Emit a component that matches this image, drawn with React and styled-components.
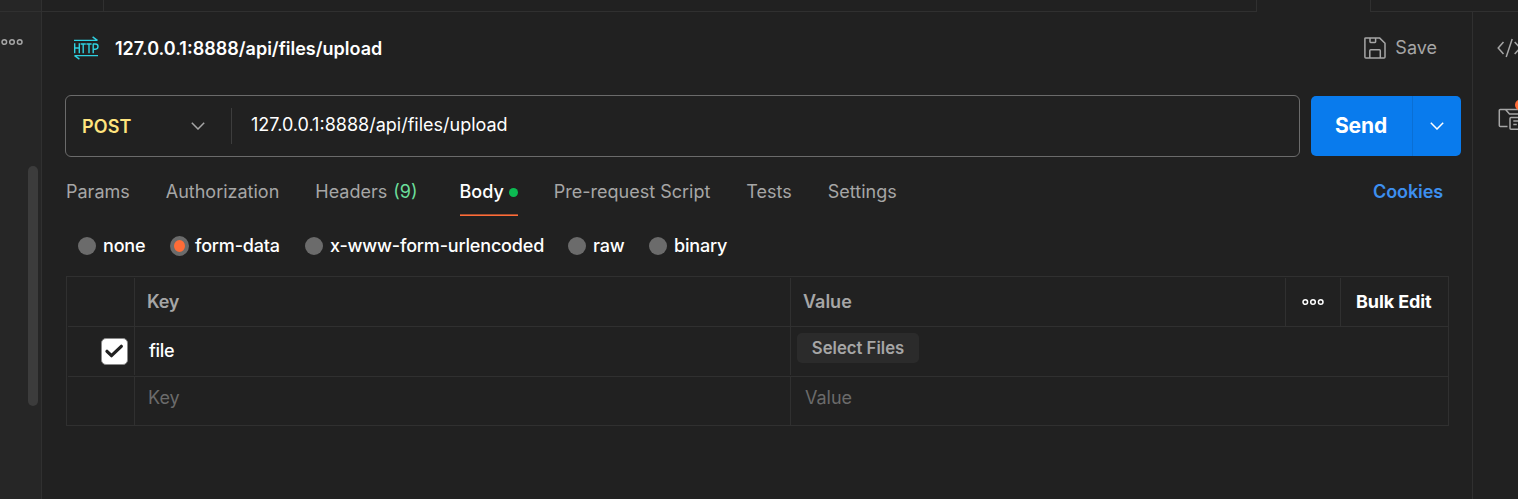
import React from 'react';
import styled, { createGlobalStyle } from 'styled-components';

const c = {
  bg: '#212121',
  side: '#262626',
  line: '#303030',
  text: '#ffffff',
  muted: '#a6a6a6',
  faint: '#6b6b6b',
  orange: '#ff6c37',
  green: '#0cbb52',
  blue: '#097bed',
};

const GlobalStyle = createGlobalStyle`
  * { box-sizing: border-box; }
  body {
    margin: 0;
    background: ${c.bg};
    color: ${c.text};
    font-family: Inter, "Liberation Sans", sans-serif;
    font-size: 18px;
    line-height: 24px;
    overflow: hidden;
  }
  svg { display: block; flex: none; }
`;

const Page = styled.div`
  width: 1518px;
  height: 499px;
  display: flex;
  overflow: hidden;
`;

const Sidebar = styled.aside`
  width: 42px;
  flex: none;
  background: ${c.side};
  border-right: 1px solid ${c.line};
  display: flex;
  flex-direction: column;
`;

const SidebarTop = styled.div`
  height: 12px;
  border-bottom: 1px solid ${c.line};
`;

const SidebarMore = styled.div`
  margin: 26px 0 0 1px;
`;

const ScrollThumb = styled.div`
  width: 10px;
  height: 240px;
  margin: 120px 3px 0 auto;
  border-radius: 5px;
  background: #3c3c3c;
`;

const Workspace = styled.div`
  flex: 1;
  min-width: 0;
  display: flex;
  flex-direction: column;
`;

const TabStrip = styled.div`
  height: 12px;
  flex: none;
  display: flex;
`;

const StripCell = styled.div`
  width: ${(p) => p.$width || 'auto'};
  flex: ${(p) => (p.$width ? 'none' : 1)};
  border-right: ${(p) => (p.$divider ? `1px solid ${c.line}` : '0')};
  border-bottom: ${(p) => (p.$open ? '0' : `1px solid ${c.line}`)};
`;

const Content = styled.div`
  flex: 1;
  display: flex;
`;

const Request = styled.main`
  width: 1431px;
  flex: none;
  border-right: 1px solid ${c.line};
  display: flex;
  flex-direction: column;
`;

const Header = styled.header`
  height: 72px;
  padding: 0 35px 0 31px;
  display: flex;
  align-items: center;
`;

const Title = styled.h1`
  margin: 0 auto 0 16px;
  padding-top: 2px;
  font-size: 18px;
  font-weight: 600;
`;

const SaveButton = styled.div`
  display: flex;
  align-items: center;
  gap: 9px;
  color: ${c.muted};
`;

const UrlRow = styled.div`
  display: flex;
  align-items: center;
  gap: 11px;
  margin: 11px 0 0 23px;
`;

const UrlBox = styled.div`
  width: 1235px;
  height: 62px;
  border: 1px solid #6b6b6b;
  border-radius: 6px;
  display: flex;
  align-items: center;
`;

const Method = styled.div`
  width: 166px;
  height: 36px;
  padding: 0 26px 0 16px;
  border-right: 1px solid #3d3d3d;
  display: flex;
  align-items: center;
  justify-content: space-between;
  color: #ffe47e;
  font-weight: 600;
`;

const MethodName = styled.span`
  padding-top: 2px;
  letter-spacing: 0.15px;
`;

const Url = styled.div`
  padding: 0 0 3px 19px;
`;

const Send = styled.div`
  width: 150px;
  height: 60px;
  border-radius: 5px;
  background: ${c.blue};
  display: flex;
  overflow: hidden;
`;

const SendLabel = styled.div`
  width: 102px;
  padding-right: 1px;
  border-right: 1px solid #0a6fd4;
  display: flex;
  align-items: center;
  justify-content: center;
  font-size: 21px;
  font-weight: 700;
  letter-spacing: -0.1px;
`;

const SendMore = styled.div`
  flex: 1;
  display: flex;
  align-items: center;
  justify-content: center;
`;

const Tabs = styled.nav`
  height: 59px;
  padding: 0 29px 0 24px;
  display: flex;
  gap: 36px;
`;

const Tab = styled.div`
  height: 59px;
  margin-left: ${(p) => (p.$active ? '6px' : '0')};
  padding-top: 23px;
  display: flex;
  gap: ${(p) => (p.$active ? '5px' : '6px')};
  color: ${(p) => (p.$active ? c.text : c.muted)};
  font-weight: ${(p) => (p.$active ? 500 : 400)};
  box-shadow: ${(p) => (p.$active ? `inset 0 -1px 0 ${c.orange}, inset 0 -2px 0 #a64d2f` : 'none')};
`;

const Count = styled.span`
  color: #6bdd9a;
`;

const Dot = styled.i`
  width: 9px;
  height: 9px;
  margin-top: 8px;
  border-radius: 50%;
  background: ${c.green};
`;

const Cookies = styled.div`
  margin-left: auto;
  padding-top: 23px;
  color: #3d8fef;
  font-weight: 600;
  letter-spacing: -0.1px;
`;

const Options = styled.div`
  height: 60px;
  padding-left: 36px;
  display: flex;
  align-items: center;
`;

const Option = styled.label`
  width: ${(p) => p.$width};
  display: flex;
  align-items: center;
  gap: ${(p) => (p.$on ? '6px' : '7px')};
  font-weight: 500;
  letter-spacing: -0.18px;
  white-space: nowrap;
`;

const Radio = styled.i`
  width: ${(p) => (p.$on ? '19px' : '18px')};
  height: ${(p) => (p.$on ? '20px' : '18px')};
  border-radius: 50%;
  border: ${(p) => (p.$on ? '4px' : '0')} solid ${c.faint};
  background: ${(p) => (p.$on ? c.orange : c.faint)};
`;

const Table = styled.div`
  width: 1383px;
  height: 150px;
  margin-left: 24px;
  padding: 1px 0 0 1px;
  border: 1px solid ${c.line};
  display: flex;
  flex-direction: column;
`;

const Row = styled.div`
  height: ${(p) => p.$height};
  padding-bottom: ${(p) => p.$inset || '0'};
  border-bottom: ${(p) => (p.$last ? '0' : `1px solid ${c.line}`)};
  display: grid;
  grid-template-columns: ${(p) => (p.$head ? '67px 656px 495px 55px 107px' : '67px 656px 1fr')};
`;

const Cell = styled.div`
  border-right: ${(p) => (p.$end ? '0' : `1px solid ${c.line}`)};
  padding-left: ${(p) => p.$left || '0'};
  padding-top: ${(p) => p.$top || '0'};
  display: flex;
  align-items: flex-start;
  color: ${(p) => p.$color || c.text};
  font-weight: ${(p) => p.$weight || 400};
  letter-spacing: ${(p) => p.$track || 'normal'};
`;

const Check = styled.span`
  width: 27px;
  height: 27px;
  border-radius: 5px;
  background: #fff;
  border: 1px solid #8a8a8a;
  display: flex;
  align-items: center;
  justify-content: center;
`;

const SelectFiles = styled.span`
  width: 122px;
  height: 30px;
  border-radius: 5px;
  background: #2b2b2b;
  color: ${c.muted};
  font-size: 16.7px;
  font-weight: 600;
  line-height: 30px;
  text-align: center;
`;

const Rail = styled.aside`
  flex: 1;
  min-width: 0;
  overflow: hidden;
  padding-left: 23px;
  display: flex;
  flex-direction: column;
`;

const RailIcon = styled.div`
  margin-top: ${(p) => p.$top};
  margin-left: ${(p) => p.$left || '0'};
`;

const More = ({ color }) => (
  <svg width="22" height="8" viewBox="0 0 22 8" fill="none" stroke={color} strokeWidth="1.5">
    <circle cx="3.3" cy="4" r="2.3" />
    <circle cx="11" cy="4" r="2.3" />
    <circle cx="18.7" cy="4" r="2.3" />
  </svg>
);

const Chevron = ({ color }) => (
  <svg width="14" height="8" viewBox="0 0 14 8" fill="none" stroke={color} strokeWidth="1.5">
    <path d="M.8 .8 7 7l6.200-6.200" />
  </svg>
);

const HttpIcon = () => (
  <svg width="26" height="24" viewBox="0 0 26 24" fill="none" stroke="#2fd0e0" strokeWidth="1.4" strokeLinejoin="bevel">
    <path d="M1 4.400H24.400L19.600 .9" />
    <path d="M25 19.600H1.600L6.400 23.100" />
    <path d="M1.700 7.300v9.900M6.300 7.300v9.900M1.700 12h4.600M7.600 8h5.200M10.200 8v9.200M13.400 8h5.200M16 8v9.200M20.200 17.200V8h2.200a2.200 2.200 0 0 1 0 5.200h-2.200" />
  </svg>
);

const SaveIcon = () => (
  <svg width="22" height="22" viewBox="0 0 22 22" fill="none" stroke="#a6a6a6" strokeWidth="1.500" strokeLinejoin="round">
    <path d="M1.700 .9H15.500L21 6.200V20.100a1 1 0 0 1-1 1H1.900a1 1 0 0 1-1-1V1.700a.8 .8 0 0 1 .8-.8Z" />
    <path d="M6 1V4.800a.6 .6 0 0 0 .6 .6H11a.6 .6 0 0 0 .6-.6V1M5.800 21V13.700a.9 .9 0 0 1 .9-.9h8.700a.9 .9 0 0 1 .9 .9V21" />
  </svg>
);

const CodeIcon = () => (
  <svg width="28" height="20" viewBox="0 0 28 20" fill="none" stroke="#a6a6a6" strokeWidth="1.500">
    <path d="M7.500 4 2.200 10l5.300 6M16.200 1 10.200 19M18.700 4 24 10l-5.300 6" />
  </svg>
);

const DocsIcon = () => (
  <svg width="32" height="34" viewBox="0 0 32 34" fill="none" stroke="#a6a6a6" strokeWidth="1.500" strokeLinejoin="round">
    <path d="M9.500 27.500H2.300a1 1 0 0 1-1-1V11.500a1 1 0 0 1 1-1H7.500l4 4.500H24M7.500 10.500h16" />
    <path d="M13 18.400H24.500v11.800H13a1 1 0 0 1-1-1V19.400a1 1 0 0 1 1-1ZM15.300 22h5M15.300 25.500h3.500" />
    <circle cx="22.500" cy="6" r="5.500" fill="#ff6c37" stroke="none" />
  </svg>
);

const options = [
  ['none', '92px'],
  ['form-data', '135px', true],
  ['x-www-form-urlencoded', '263px'],
  ['raw', '81px'],
  ['binary', '90px'],
];

export default function App() {
  return (
    <Page>
      <GlobalStyle />
      <Sidebar>
        <SidebarTop />
        <SidebarMore><More color="#a6a6a6" /></SidebarMore>
        <ScrollThumb />
      </Sidebar>
      <Workspace>
        <TabStrip>
          <StripCell $width="62px" $divider />
          <StripCell $width="1153px" $divider />
          <StripCell $width="114px" $divider $open />
          <StripCell />
        </TabStrip>
        <Content>
          <Request>
            <Header>
              <HttpIcon />
              <Title>127.0.0.1:8888/api/files/upload</Title>
              <SaveButton><SaveIcon />Save</SaveButton>
            </Header>
            <UrlRow>
              <UrlBox>
                <Method><MethodName>POST</MethodName><Chevron color="#a6a6a6" /></Method>
                <Url>127.0.0.1:8888/api/files/upload</Url>
              </UrlBox>
              <Send>
                <SendLabel>Send</SendLabel>
                <SendMore><Chevron color="#fff" /></SendMore>
              </Send>
            </UrlRow>
            <Tabs>
              <Tab>Params</Tab>
              <Tab>Authorization</Tab>
              <Tab>Headers <Count>(9)</Count></Tab>
              <Tab $active>Body <Dot /></Tab>
              <Tab>Pre-request Script</Tab>
              <Tab>Tests</Tab>
              <Tab>Settings</Tab>
              <Cookies>Cookies</Cookies>
            </Tabs>
            <Options>
              {options.map(([label, width, on]) => (
                <Option key={label} $width={width} $on={on}><Radio $on={on} />{label}</Option>
              ))}
            </Options>
            <Table>
              <Row $head $height="49px">
                <Cell />
                <Cell $left="12px" $top="12px" $color={c.muted} $weight={600} $track="-0.2px">Key</Cell>
                <Cell $left="12px" $top="12px" $color={c.muted} $weight={600}>Value</Cell>
                <Cell $left="16px" $top="20px"><More color="#fff" /></Cell>
                <Cell $end $left="15px" $top="12px" $weight={700} $track="-0.1px">Bulk Edit</Cell>
              </Row>
              <Row $height="50px" $inset="1px">
                <Cell $left="33px" $top="11px">
                  <Check>
                    <svg width="19" height="15" viewBox="0 0 19 15" fill="none" stroke="#212121" strokeWidth="3.200" strokeLinecap="round" strokeLinejoin="round">
                      <path d="M2 7.300 6.500 11.700 16.300 2.300" />
                    </svg>
                  </Check>
                </Cell>
                <Cell $left="14px" $top="12px" $weight={500} $track="-0.3px">file</Cell>
                <Cell $end $left="6px" $top="6px"><SelectFiles>Select Files</SelectFiles></Cell>
              </Row>
              <Row $last $height="48px">
                <Cell />
                <Cell $left="13px" $top="9px" $color={c.faint}>Key</Cell>
                <Cell $end $left="14px" $top="9px" $color={c.faint}>Value</Cell>
              </Row>
            </Table>
          </Request>
          <Rail>
            <RailIcon $top="26px"><CodeIcon /></RailIcon>
            <RailIcon $top="41px" $left="2px"><DocsIcon /></RailIcon>
          </Rail>
        </Content>
      </Workspace>
    </Page>
  );
}
